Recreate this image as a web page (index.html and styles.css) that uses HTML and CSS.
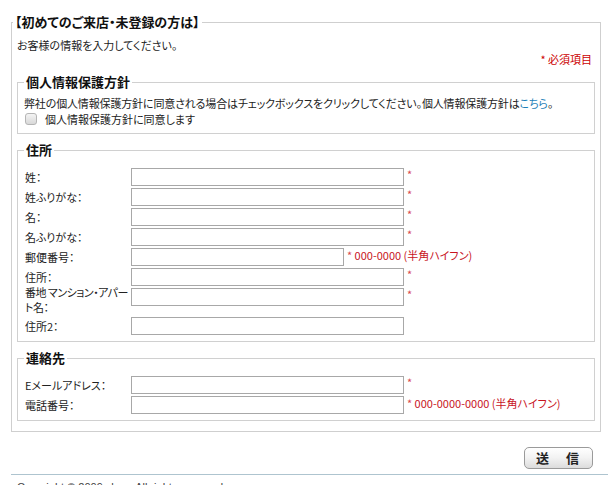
FILE: index.html
```html
<!DOCTYPE html>
<html lang="ja">
<head>
<meta charset="utf-8">
<title>お客様情報入力</title>
<link rel="stylesheet" href="styles.css">
</head>
<body>
<div class="page">
  <form class="form">
    <fieldset class="box">
      <legend class="box-title">【初めてのご来店・未登録の方は】</legend>
      <p class="intro">お客様の情報を入力してください。</p>
      <p class="required-note">* 必須項目</p>

      <fieldset class="group group-privacy">
        <legend class="group-title">個人情報保護方針</legend>
        <p class="privacy-text">弊社の個人情報保護方針に同意される場合はチェックボックスをクリックしてください。個人情報保護方針は<a class="link" href="#">こちら</a>。</p>
        <label class="agree"><input class="check" type="checkbox"><span>個人情報保護方針に同意します</span></label>
      </fieldset>

      <fieldset class="group group-fields">
        <legend class="group-title">住所</legend>
        <div class="row"><label class="lbl">姓：</label><input class="field" type="text"><span class="req">*</span></div>
        <div class="row"><label class="lbl">姓ふりがな：</label><input class="field" type="text"><span class="req">*</span></div>
        <div class="row"><label class="lbl">名：</label><input class="field" type="text"><span class="req">*</span></div>
        <div class="row"><label class="lbl">名ふりがな：</label><input class="field" type="text"><span class="req">*</span></div>
        <div class="row"><label class="lbl">郵便番号：</label><input class="field field-short" type="text"><span class="note"><span class="star">*</span> 000-0000 (半角ハイフン)</span></div>
        <div class="row"><label class="lbl">住所：</label><input class="field" type="text"><span class="req">*</span></div>
        <div class="row row-tall"><label class="lbl lbl-wrap"><span class="nowrap">番地 マンション・アパー</span><br>ト名：</label><input class="field" type="text"><span class="req">*</span></div>
        <div class="row"><label class="lbl">住所2：</label><input class="field" type="text"></div>
      </fieldset>

      <fieldset class="group group-fields">
        <legend class="group-title">連絡先</legend>
        <div class="row"><label class="lbl">Eメールアドレス：</label><input class="field" type="text"><span class="req">*</span></div>
        <div class="row"><label class="lbl">電話番号：</label><input class="field" type="text"><span class="note"><span class="star">*</span> 000-0000-0000 (半角ハイフン)</span></div>
      </fieldset>
    </fieldset>

    <div class="actions">
      <button class="submit" type="button">送　信</button>
    </div>
  </form>
  <footer class="footer">Copyright © 2009 shop. All rights reserved.</footer>
</div>
</body>
</html>
```

FILE: styles.css
```css
html, body {
  margin: 0;
  padding: 0;
  background: #fff;
}

body {
  font-family: "Noto Sans CJK JP", "Liberation Sans", sans-serif;
  font-size: 11px;
  color: #222;
  font-feature-settings: "palt";
}

.page {
  padding: 14px 0 0 11px;
}

.form {
  width: 590px;
}

.box {
  margin: 0;
  min-width: 0;
  box-sizing: border-box;
  width: 590px;
  border: 1px solid #cfcfcf;
  padding: 0 5px 10px;
}

.box-title {
  font-size: 13px;
  font-weight: bold;
  line-height: 16px;
  color: #111;
  padding: 0 2px;
  margin-left: -4px;
}

.intro {
  margin: 8px 0 0;
  line-height: 14px;
}

.required-note {
  margin: 0;
  line-height: 14px;
  text-align: right;
  padding-right: 3px;
  color: #c00;
}

.group {
  margin: 8px 0 0;
  min-width: 0;
  border: 1px solid #d0d0d0;
}

.group-privacy {
  padding: 6px 6px 6px 6px;
}

.group-fields {
  padding: 10px 6px 6px 7px;
}

.group-title {
  font-size: 13px;
  font-weight: bold;
  line-height: 16px;
  color: #111;
  padding: 0 2px;
}

.group-fields .group-title {
  margin-left: -1px;
}

.privacy-text {
  margin: 0;
  line-height: 14px;
  letter-spacing: -0.15px;
}

.link {
  color: #1f7fb8;
  text-decoration: none;
}

.agree {
  display: flex;
  align-items: center;
  height: 17px;
}

.check {
  appearance: none;
  -webkit-appearance: none;
  width: 12px;
  height: 12px;
  margin: 0 8px 0 1px;
  border: 1px solid #b5b5b5;
  border-radius: 3px;
  background: linear-gradient(#f4f4f4, #d8d8d8);
  box-sizing: border-box;
}

.row {
  display: flex;
  align-items: center;
  margin-bottom: 2px;
}

.row:last-child {
  margin-bottom: 0;
}

.row-tall {
  align-items: flex-start;
  margin-bottom: 2px;
}

.lbl {
  flex: none;
  width: 106px;
  line-height: 14px;
}

.lbl-wrap {
  margin-top: -3px;
  line-height: 15px;
  letter-spacing: -0.5px;
}

.nowrap {
  white-space: nowrap;
}

.field {
  flex: none;
  box-sizing: border-box;
  width: 273px;
  height: 18px;
  margin: 0;
  padding: 0 2px;
  border: 1px solid #a8a8a8;
  background: #fff;
  font: inherit;
}

.field-short {
  width: 213px;
}

.req {
  align-self: flex-start;
  margin-left: 3px;
  line-height: 12px;
  color: #d8484f;
}

.note {
  align-self: flex-start;
  margin-left: 3px;
  line-height: 14px;
  color: #c8141e;
}

.star {
  color: #d8484f;
}

.actions {
  display: flex;
  justify-content: flex-end;
  padding-right: 8px;
  margin-top: 15px;
}

.submit {
  box-sizing: border-box;
  width: 69px;
  height: 22px;
  margin: 0;
  padding: 0;
  border: 1px solid #9a9a9a;
  border-radius: 5px;
  background: linear-gradient(#ffffff, #f2f2f2 50%, #dcdcdc);
  font-family: "Noto Sans CJK JP", sans-serif;
  font-size: 13px;
  font-weight: bold;
  color: #222;
  letter-spacing: 2px;
  line-height: 18px;
}

.footer {
  margin-top: 5px;
  border-top: 1px solid #aec4cf;
  padding: 6px 0 0 6px;
  font-family: "Liberation Sans", sans-serif;
  font-size: 11px;
  color: #444;
}
```
